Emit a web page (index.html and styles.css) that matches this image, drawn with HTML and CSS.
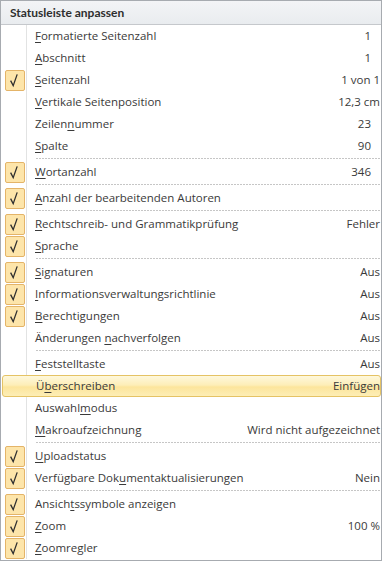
FILE: index.html
```html
<!DOCTYPE html>
<html lang="de">
<head>
<meta charset="utf-8">
<link rel="stylesheet" href="styles.css">
</head>
<body>
<div class="menu">
  <div class="header">Statusleiste anpassen</div>
  <div class="body">
    <div class="item"><span class="cell"></span><span class="label"><u>F</u>ormatierte Seitenzahl</span><span class="val num">1</span></div>
    <div class="item"><span class="cell"></span><span class="label"><u>A</u>bschnitt</span><span class="val num">1</span></div>
    <div class="item"><span class="cell"><span class="chk"><svg viewBox="0 0 18 19" width="18" height="19"><path d="M4.6 9.6 L7.2 14.6 L11.2 3.4" fill="none" stroke="#2f2f2f" stroke-width="1.3"/></svg></span></span><span class="label"><u>S</u>eitenzahl</span><span class="val">1 von 1</span></div>
    <div class="item"><span class="cell"></span><span class="label"><u>V</u>ertikale Seitenposition</span><span class="val">12,3 cm</span></div>
    <div class="item"><span class="cell"></span><span class="label">Zeilen<u>n</u>ummer</span><span class="val num">23</span></div>
    <div class="item"><span class="cell"></span><span class="label"><u>S</u>palte</span><span class="val num">90</span></div>
    <div class="sep"></div>
    <div class="item"><span class="cell"><span class="chk"><svg viewBox="0 0 18 19" width="18" height="19"><path d="M4.6 9.6 L7.2 14.6 L11.2 3.4" fill="none" stroke="#2f2f2f" stroke-width="1.3"/></svg></span></span><span class="label"><u>W</u>ortanzahl</span><span class="val num">346</span></div>
    <div class="sep"></div>
    <div class="item"><span class="cell"><span class="chk"><svg viewBox="0 0 18 19" width="18" height="19"><path d="M4.6 9.6 L7.2 14.6 L11.2 3.4" fill="none" stroke="#2f2f2f" stroke-width="1.3"/></svg></span></span><span class="label"><u>A</u>nzahl der bearbeitenden Autoren</span><span class="val"></span></div>
    <div class="sep"></div>
    <div class="item"><span class="cell"><span class="chk"><svg viewBox="0 0 18 19" width="18" height="19"><path d="M4.6 9.6 L7.2 14.6 L11.2 3.4" fill="none" stroke="#2f2f2f" stroke-width="1.3"/></svg></span></span><span class="label"><u>R</u>echtschreib- und Grammatikprüfung</span><span class="val">Fehler</span></div>
    <div class="item"><span class="cell"><span class="chk"><svg viewBox="0 0 18 19" width="18" height="19"><path d="M4.6 9.6 L7.2 14.6 L11.2 3.4" fill="none" stroke="#2f2f2f" stroke-width="1.3"/></svg></span></span><span class="label"><u>S</u>prache</span><span class="val"></span></div>
    <div class="sep"></div>
    <div class="item"><span class="cell"><span class="chk"><svg viewBox="0 0 18 19" width="18" height="19"><path d="M4.6 9.6 L7.2 14.6 L11.2 3.4" fill="none" stroke="#2f2f2f" stroke-width="1.3"/></svg></span></span><span class="label"><u>S</u>ignaturen</span><span class="val">Aus</span></div>
    <div class="item"><span class="cell"><span class="chk"><svg viewBox="0 0 18 19" width="18" height="19"><path d="M4.6 9.6 L7.2 14.6 L11.2 3.4" fill="none" stroke="#2f2f2f" stroke-width="1.3"/></svg></span></span><span class="label"><u>I</u>nformationsverwaltungsrichtlinie</span><span class="val">Aus</span></div>
    <div class="item"><span class="cell"><span class="chk"><svg viewBox="0 0 18 19" width="18" height="19"><path d="M4.6 9.6 L7.2 14.6 L11.2 3.4" fill="none" stroke="#2f2f2f" stroke-width="1.3"/></svg></span></span><span class="label"><u>B</u>erechtigungen</span><span class="val">Aus</span></div>
    <div class="item"><span class="cell"></span><span class="label">Änderungen <u>n</u>achverfolgen</span><span class="val">Aus</span></div>
    <div class="sep"></div>
    <div class="item"><span class="cell"></span><span class="label"><u>F</u>eststelltaste</span><span class="val">Aus</span></div>
    <div class="item hover"><span class="cell"></span><span class="label">Ü<u>b</u>erschreiben</span><span class="val">Einfügen</span></div>
    <div class="item"><span class="cell"></span><span class="label">Auswahl<u>m</u>odus</span><span class="val"></span></div>
    <div class="item"><span class="cell"></span><span class="label"><u>M</u>akroaufzeichnung</span><span class="val">Wird nicht aufgezeichnet</span></div>
    <div class="sep"></div>
    <div class="item"><span class="cell"><span class="chk"><svg viewBox="0 0 18 19" width="18" height="19"><path d="M4.6 9.6 L7.2 14.6 L11.2 3.4" fill="none" stroke="#2f2f2f" stroke-width="1.3"/></svg></span></span><span class="label"><u>U</u>ploadstatus</span><span class="val"></span></div>
    <div class="item"><span class="cell"><span class="chk"><svg viewBox="0 0 18 19" width="18" height="19"><path d="M4.6 9.6 L7.2 14.6 L11.2 3.4" fill="none" stroke="#2f2f2f" stroke-width="1.3"/></svg></span></span><span class="label">Verfügbare Dok<u>u</u>mentaktualisierungen</span><span class="val">Nein</span></div>
    <div class="sep"></div>
    <div class="item"><span class="cell"><span class="chk"><svg viewBox="0 0 18 19" width="18" height="19"><path d="M4.6 9.6 L7.2 14.6 L11.2 3.4" fill="none" stroke="#2f2f2f" stroke-width="1.3"/></svg></span></span><span class="label">Ansich<u>t</u>ssymbole anzeigen</span><span class="val"></span></div>
    <div class="item"><span class="cell"><span class="chk"><svg viewBox="0 0 18 19" width="18" height="19"><path d="M4.6 9.6 L7.2 14.6 L11.2 3.4" fill="none" stroke="#2f2f2f" stroke-width="1.3"/></svg></span></span><span class="label"><u>Z</u>oom</span><span class="val">100 %</span></div>
    <div class="item"><span class="cell"><span class="chk"><svg viewBox="0 0 18 19" width="18" height="19"><path d="M4.6 9.6 L7.2 14.6 L11.2 3.4" fill="none" stroke="#2f2f2f" stroke-width="1.3"/></svg></span></span><span class="label"><u>Z</u>oomregler</span><span class="val"></span></div>
  </div>
</div>
</body>
</html>
```
FILE: styles.css
```css
html, body {
  margin: 0;
  padding: 0;
  background: #ffffff;
}
.menu {
  width: 380px;
  height: 559px;
  border: 1px solid #a7abb0;
  background: #ffffff;
  font-family: "Open Sans", "Liberation Sans", sans-serif;
  font-size: 11.5px;
  color: #3a3a3a;
  overflow: hidden;
}
.header {
  height: 23px;
  border-bottom: 1px solid #c5c8cc;
  background: linear-gradient(#f3f4f6, #e9ecef);
  font-family: Lato, "Open Sans", sans-serif;
  font-size: 12px;
  font-weight: bold;
  padding-left: 9px;
  display: flex;
  align-items: center;
  color: #2e2e2e;
}
.body {
  background: linear-gradient(#e2e3e3, #e2e3e3) 25px 0 / 1px 100% no-repeat;
}
.item {
  display: flex;
  align-items: center;
  height: 22px;
  box-sizing: border-box;
}
.cell {
  width: 25px;
  height: 22px;
  display: flex;
  align-items: center;
  flex: none;
}
.chk {
  margin-left: 4px;
  width: 18px;
  height: 19px;
  border: 1px solid #e4b468;
  border-radius: 2px;
  background: #fde5aa;
  display: block;
}
.chk svg {
  display: block;
}
.label {
  margin-left: 9px;
  margin-bottom: 2px;
  flex: 1;
  white-space: nowrap;
}
.val {
  padding-right: 1px;
  margin-bottom: 2px;
  white-space: nowrap;
}
.val.num {
  padding-right: 10px;
}
.hover {
  margin: 0 0 0 1px;
  border: 1px solid #e5c365;
  border-radius: 3px;
  background: linear-gradient(#fef8dc, #fdeeb8 45%, #fce59c 55%, #fdeeb6);
}
.hover .cell {
  width: 24px;
  height: 20px;
}
.hover .val {
  padding-right: 0;
}
.sep {
  height: 4px;
  margin-left: 35px;
  background: repeating-linear-gradient(90deg, #c6c6c6 0 2px, transparent 2px 3px) 0 1px / 100% 1px no-repeat;
}
u {
  text-decoration: underline;
  text-underline-offset: 2px;
}
```
